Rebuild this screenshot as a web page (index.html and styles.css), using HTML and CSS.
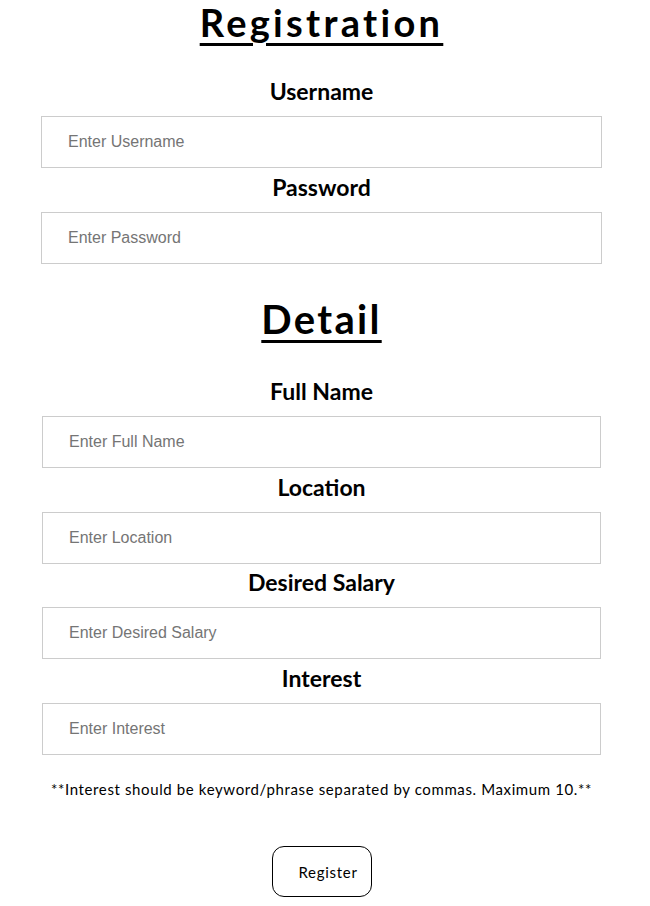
FILE: index.html
```html
<!DOCTYPE html>
<html>
<head>
<meta charset="utf-8">
<link rel="stylesheet" href="styles.css">
</head>
<body>
<div class="page">
  <h1 class="title title-top">Registration</h1>
  <div class="fields fields-account">
    <label class="label">Username</label>
    <input class="field" type="text" placeholder="Enter Username">
    <label class="label">Password</label>
    <input class="field" type="password" placeholder="Enter Password">
  </div>
  <h1 class="title title-detail">Detail</h1>
  <div class="fields fields-detail">
    <label class="label">Full Name</label>
    <input class="field" type="text" placeholder="Enter Full Name">
    <label class="label">Location</label>
    <input class="field" type="text" placeholder="Enter Location">
    <label class="label label-tight">Desired Salary</label>
    <input class="field" type="text" placeholder="Enter Desired Salary">
    <label class="label">Interest</label>
    <input class="field" type="text" placeholder="Enter Interest">
  </div>
  <p class="note">**Interest should be keyword/phrase separated by commas. Maximum 10.**</p>
  <div class="actions">
    <button class="register" type="button">Register</button>
  </div>
</div>
</body>
</html>
```
FILE: styles.css
```css
html, body {
  margin: 0;
  padding: 0;
  background: #ffffff;
}
body {
  font-family: Lato, "Noto Sans", sans-serif;
  color: #000;
}
.page {
  width: 643px;
  display: flex;
  flex-direction: column;
  align-items: center;
}
.title {
  margin: 0;
  font-size: 38px;
  font-weight: 700;
  line-height: 45px;
  text-decoration: underline;
  text-decoration-thickness: 3px;
  text-underline-offset: 6px;
  text-align: center;
}
.title-top {
  margin-bottom: 27px;
  letter-spacing: 3.3px;
}
.title-detail {
  margin-top: 33px;
  margin-bottom: 30px;
  font-size: 40px;
  letter-spacing: 2.3px;
}
.fields {
  display: flex;
  flex-direction: column;
  align-self: stretch;
}
.fields-account {
  margin: 0 41px;
}
.fields-detail {
  margin: 0 42px;
}
.label {
  display: block;
  text-align: center;
  font-size: 23px;
  font-weight: 700;
  line-height: 38px;
  padding-bottom: 6px;
}
.label-tight {
  line-height: 37px;
}
.field {
  box-sizing: border-box;
  height: 52px;
  border: 1px solid #cccccc;
  padding: 0 26px;
  margin: 0;
  font-family: "Liberation Sans", Arial, sans-serif;
  font-size: 16px;
  color: #000;
  outline: none;
}
.field::placeholder {
  color: #757575;
}
.note {
  margin: 24px 0 0;
  font-size: 15px;
  line-height: 20px;
  letter-spacing: 0.62px;
  text-align: center;
}
.actions {
  margin-top: 47px;
  flex-shrink: 0;
}
.register {
  box-sizing: border-box;
  width: 100px;
  height: 51px;
  padding: 0 0 0 26px;
  text-align: left;
  background: #fff;
  border: 1px solid #000;
  border-radius: 12px;
  font-family: Lato, "Noto Sans", sans-serif;
  font-size: 15px;
  letter-spacing: 0.7px;
  color: #000;
}
```
